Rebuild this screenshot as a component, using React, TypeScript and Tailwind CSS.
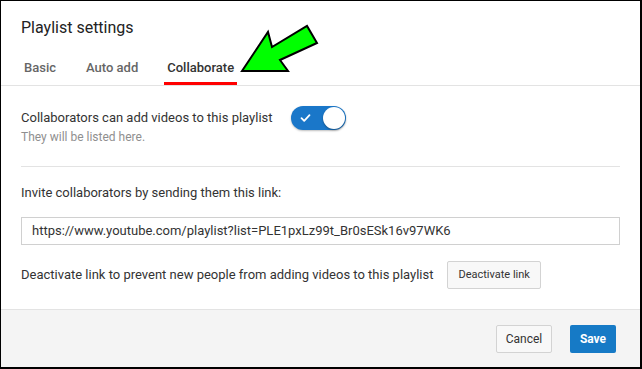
import React from "react";

export default function App() {
  return (
    <div className="relative w-[642px] h-[369px] bg-white font-['Roboto',sans-serif]">
      <div className="w-full h-full border-l border-t border-r-2 border-b-2 border-black flex flex-col">
        {/* Header */}
        <div className="border-b border-[#e3e3e3]">
          <div className="pl-[20px] pt-[17px] text-[16px] leading-[20px] text-[#222]">Playlist settings</div>
          <div className="flex pl-[20px] mt-[22px]">
            <div className="px-[3px] pb-[6px] border-b-[3px] border-transparent text-[13px] leading-[16px] font-medium text-[#666] mr-[24px]">Basic</div>
            <div className="px-[3px] pb-[6px] border-b-[3px] border-transparent text-[13px] leading-[16px] font-medium text-[#666] mr-[23px]">Auto add</div>
            <div className="px-[3px] pb-[6px] border-b-[3px] border-[#ff0000] text-[13px] leading-[16px] font-medium text-[#333]">Collaborate</div>
          </div>
        </div>

        {/* Body */}
        <div className="px-[20px] pt-[20px]">
          <div className="flex items-start gap-[18px]">
            <div className="pt-[4px]">
              <div className="text-[13px] leading-[16px] text-[#333]">Collaborators can add videos to this playlist</div>
              <div className="mt-[3px] text-[12px] leading-[16px] text-[#8f8f8f]">They will be listed here.</div>
            </div>
            <div className="relative w-[55px] h-[24px] rounded-full bg-[#1a77c9] shadow-[0_1px_2px_rgba(0,0,0,0.25)]">
              <svg className="absolute left-[9px] top-[7px]" width="11" height="10" viewBox="0 0 11 10">
                <path d="M1.5 5.2 L4.2 7.8 L9.5 2.2" fill="none" stroke="white" strokeWidth="1.8" strokeLinecap="round" strokeLinejoin="round" />
              </svg>
              <div className="absolute right-[1px] top-[1px] w-[22px] h-[22px] rounded-full bg-white shadow-[0_1px_2px_rgba(0,0,0,0.35)]" />
            </div>
          </div>

          <div className="mt-[21px] border-t border-[#e3e3e3]" />

          <div className="mt-[18px] text-[13px] leading-[16px] text-[#333]">Invite collaborators by sending them this link:</div>

          <div className="mt-[16px] h-[28px] border border-[#d0d0d0] flex items-center pl-[10px] text-[13px] text-[#333]">
            https://www.youtube.com/playlist?list=PLE1pxLz99t_Br0sESk16v97WK6
          </div>

          <div className="mt-[16px] flex items-center gap-[14px]">
            <div className="text-[13px] leading-[16px] text-[#333]">Deactivate link to prevent new people from adding videos to this playlist</div>
            <div className="h-[28px] px-[10px] flex items-center border border-[#d3d3d3] bg-[#f8f8f8] rounded-[2px] text-[11px] text-[#333]">Deactivate link</div>
          </div>
        </div>

        {/* Footer */}
        <div className="mt-[20px] flex-1 border-t border-[#e3e3e3] bg-[#f4f4f4] flex items-center justify-end pr-[24px] gap-[18px]">
          <div className="h-[28px] w-[56px] flex items-center justify-center border border-[#d3d3d3] bg-[#f8f8f8] rounded-[2px] text-[12px] text-[#333]">Cancel</div>
          <div className="h-[28px] w-[46px] flex items-center justify-center bg-[#167ac6] rounded-[2px] text-[12px] font-bold text-white">Save</div>
        </div>
      </div>

      <svg className="absolute left-0 top-0 pointer-events-none" width="642" height="369" viewBox="0 0 642 369">
        <polygon
          points="242,71 268,32 272,47 307,26 317,43 280,60 288,71"
          fill="#00ff00"
          stroke="black"
          strokeWidth="2"
          strokeLinejoin="miter"
        />
      </svg>
    </div>
  );
}
